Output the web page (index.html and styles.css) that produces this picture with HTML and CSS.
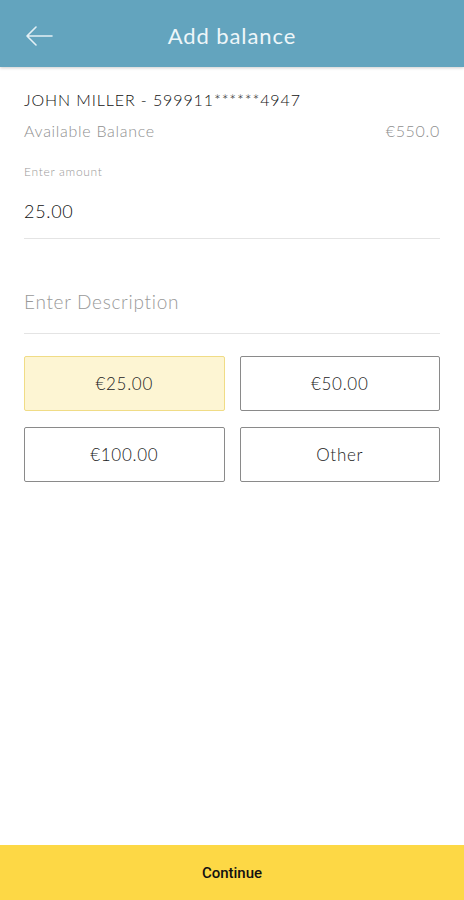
FILE: index.html
```html
<!DOCTYPE html>
<html lang="en">
<head>
  <meta charset="UTF-8" />
  <meta name="viewport" content="width=device-width, initial-scale=1.0"/>
  <title>Add balance</title>
  <link rel="stylesheet" href="styles.css">
</head>
<body>

  <header class="topbar">
    <button class="back-btn" aria-label="Back">
      <svg width="28" height="20" viewBox="0 0 28 20">
        <path d="M27 10H2M11 1L2 10l9 9" fill="none" stroke="#e4f0f5" stroke-width="1.6" stroke-linecap="round" stroke-linejoin="round"/>
      </svg>
    </button>
    <h1>Add balance</h1>
  </header>

  <main class="content">
    <p class="account">JOHN MILLER - 599911******4947</p>
    <div class="balance-row">
      <span>Available Balance</span>
      <span>€550.0</span>
    </div>

    <div class="field">
      <label for="amount">Enter amount</label>
      <input type="text" id="amount" value="25.00" />
    </div>

    <div class="field desc">
      <input type="text" id="description" placeholder="Enter Description" />
    </div>

    <div class="amounts">
      <button class="amount-btn selected">€25.00</button>
      <button class="amount-btn">€50.00</button>
      <button class="amount-btn">€100.00</button>
      <button class="amount-btn">Other</button>
    </div>
  </main>

  <button class="continue-btn">Continue</button>

</body>
</html>
```

FILE: styles.css
```css
* {
  margin: 0;
  padding: 0;
  box-sizing: border-box;
  font-family: "Lato", "Noto Sans", sans-serif;
  font-weight: 300;
  letter-spacing: 0.7px;
}

body {
  width: 464px;
  height: 900px;
  background-color: #fff;
  display: flex;
  flex-direction: column;
}

.topbar {
  height: 67px;
  background-color: #63a4be;
  display: flex;
  align-items: center;
  justify-content: center;
  position: relative;
  box-shadow: 0 1px 3px rgba(0, 0, 0, 0.2);
}

.back-btn {
  position: absolute;
  left: 25px;
  top: 26px;
  background: none;
  border: none;
  width: 28px;
  height: 20px;
}

.topbar h1 {
  font-size: 22px;
  font-weight: 400;
  color: #eef6f9;
  letter-spacing: 0.9px;
  margin-top: 4px;
}

.content {
  flex: 1;
  padding: 22px 24px 0;
}

.account {
  font-size: 16px;
  color: #111;
  line-height: 22px;
  letter-spacing: 0.9px;
}

.balance-row {
  display: flex;
  justify-content: space-between;
  font-size: 16px;
  color: #8f8f8f;
  line-height: 22px;
  margin-top: 9px;
}

.field {
  border-bottom: 1px solid #e4e4e4;
}

.field label {
  display: block;
  font-size: 12px;
  color: #999;
  margin-top: 22px;
  line-height: 16px;
}

.field input {
  width: 100%;
  border: none;
  outline: none;
  font-size: 18px;
  color: #111;
  padding: 20px 0 16px;
  background: none;
}

.field.desc input {
  font-size: 19px;
  padding: 51px 0 20px;
}

.field.desc input::placeholder {
  color: #999;
}

.amounts {
  display: grid;
  grid-template-columns: 1fr 1fr;
  column-gap: 15px;
  row-gap: 16px;
  margin-top: 22px;
}

.amount-btn {
  height: 55px;
  background-color: #fff;
  border: 1px solid #8a8a8a;
  border-radius: 2px;
  font-size: 17px;
  color: #222;
}

.amount-btn.selected {
  background-color: #fdf5d3;
  border-color: #f0dc86;
}

.continue-btn {
  height: 55px;
  border: none;
  background-color: #fdd845;
  font-family: "Roboto", sans-serif;
  font-weight: 500;
  letter-spacing: 0;
  font-size: 15px;
  color: #111;
}
```
